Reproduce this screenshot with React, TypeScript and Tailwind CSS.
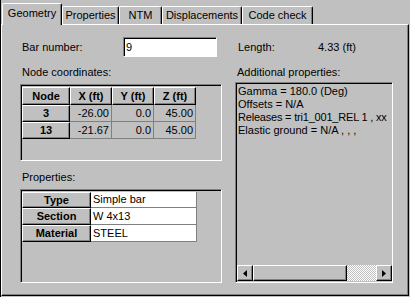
import React from "react";

const raised =
  "border border-t-white border-l-white border-b-black border-r-black shadow-[inset_-1px_-1px_0_#808080]";
const sunken =
  "border border-t-[#808080] border-l-[#808080] border-b-white border-r-white shadow-[inset_1px_1px_0_#000]";

function Tab({ label, w, active }: { label: string; w: string; active?: boolean }) {
  return active ? (
    <div
      className={`relative z-10 -mb-px h-[22px] ${w} bg-[#c0c0c0] border-l border-t border-r border-l-white border-t-white border-r-black rounded-t-[2px] shadow-[inset_-1px_0_0_#808080] pt-[3px] text-center`}
    >
      {label}
    </div>
  ) : (
    <div
      className={`h-[18px] ${w} bg-[#c0c0c0] border-l border-t border-r border-l-white border-t-white border-r-black rounded-t-[2px] shadow-[inset_-1px_0_0_#808080] pt-[2px] text-center`}
    >
      {label}
    </div>
  );
}

function HeadCell({ children, w, h }: { children: React.ReactNode; w: string; h: string }) {
  return (
    <div className={`${w} ${h} ${raised} flex items-center justify-center font-bold`}>{children}</div>
  );
}

function NumCell({ children, w, h }: { children: React.ReactNode; w: string; h: string }) {
  return (
    <div
      className={`${w} ${h} border-r border-b border-[#808080] flex items-center justify-end pr-[2px]`}
    >
      {children}
    </div>
  );
}

function ValCell({ children, w, h }: { children: React.ReactNode; w: string; h: string }) {
  return (
    <div
      className={`${w} ${h} bg-white border-r border-b border-[#808080] flex items-center pl-[2px]`}
    >
      {children}
    </div>
  );
}

function LeftArrow() {
  return (
    <svg width="4" height="7" viewBox="0 0 4 7">
      <path d="M4 0 L0 3.5 L4 7 Z" fill="#000" />
    </svg>
  );
}
function RightArrow() {
  return (
    <svg width="4" height="7" viewBox="0 0 4 7">
      <path d="M0 0 L4 3.5 L0 7 Z" fill="#000" />
    </svg>
  );
}

export default function App() {
  const nodes = [
    { n: "3", x: "-26.00", y: "0.0", z: "45.00" },
    { n: "13", x: "-21.67", y: "0.0", z: "45.00" },
  ];
  return (
    <div className="w-[410px] h-[297px] bg-[#c0c0c0] overflow-hidden border-l border-l-black font-['Liberation_Sans',Arial,sans-serif] text-[11px] leading-[13px] text-black">
      {/* tab strip */}
      <div className="flex items-end h-[24px] pl-[1px]">
        <Tab label="Geometry" w="w-[60px]" active />
        <Tab label="Properties" w="w-[57px]" />
        <Tab label="NTM" w="w-[43px]" />
        <Tab label="Displacements" w="w-[80px]" />
        <Tab label="Code check" w="w-[71px]" />
      </div>
      {/* panel */}
      <div className="w-[408px] h-[272px] border border-t-white border-l-white border-r-black border-b-black shadow-[inset_-1px_-1px_0_#808080] pl-[18px] pt-[12px]">
        <div className="flex h-[20px] items-center">
          <div className="w-[103px] pl-[2px]">Bar number:</div>
          <div className={`w-[94px] h-[20px] bg-white ${sunken} flex items-center pl-[2px]`}>9</div>
          <div className="w-[18px]" />
          <div className="w-[83px] pl-[3px]">Length:</div>
          <div>4.33 (ft)</div>
        </div>

        <div className="flex mt-[9px]">
          {/* left column */}
          <div className="w-[202px] flex flex-col">
            <div className="h-[13px] pl-[2px]">Node coordinates:</div>
            <div className={`mt-[5px] h-[77px] ${sunken} pl-[1px] pt-[2px]`}>
              <div className="flex">
                <HeadCell w="w-[48px]" h="h-[18px]">Node</HeadCell>
                <HeadCell w="w-[42px]" h="h-[18px]">X (ft)</HeadCell>
                <HeadCell w="w-[42px]" h="h-[18px]">Y (ft)</HeadCell>
                <HeadCell w="w-[42px]" h="h-[18px]">Z (ft)</HeadCell>
              </div>
              {nodes.map((r) => (
                <div className="flex" key={r.n}>
                  <HeadCell w="w-[48px]" h="h-[17px]">{r.n}</HeadCell>
                  <NumCell w="w-[42px]" h="h-[17px]">{r.x}</NumCell>
                  <NumCell w="w-[42px]" h="h-[17px]">{r.y}</NumCell>
                  <NumCell w="w-[42px]" h="h-[17px]">{r.z}</NumCell>
                </div>
              ))}
            </div>

            <div className="mt-[10px] h-[13px] pl-[2px]">Properties:</div>
            <div className={`mt-[5px] h-[94px] ${sunken} pl-[1px] pt-[2px]`}>
              <div className="flex">
                <HeadCell w="w-[69px]" h="h-[16px]">Type</HeadCell>
                <ValCell w="w-[106px]" h="h-[16px]">Simple bar</ValCell>
              </div>
              <div className="flex">
                <HeadCell w="w-[69px]" h="h-[17px]">Section</HeadCell>
                <ValCell w="w-[106px]" h="h-[17px]">W 4x13</ValCell>
              </div>
              <div className="flex">
                <HeadCell w="w-[69px]" h="h-[17px]">Material</HeadCell>
                <ValCell w="w-[106px]" h="h-[17px]">STEEL</ValCell>
              </div>
            </div>
          </div>

          {/* right column */}
          <div className="ml-[13px] w-[158px] flex flex-col">
            <div className="h-[13px] pl-[2px]">Additional properties:</div>
            <div className={`mt-[3px] h-[201px] ${sunken} flex flex-col`}>
              <div className="flex-1 overflow-hidden whitespace-nowrap pl-[2px] pt-[2px]">
                <div>Gamma = 180.0 (Deg)</div>
                <div>Offsets = N/A</div>
                <div className="tracking-[-0.2px]">Releases = tri1_001_REL 1 , xx</div>
                <div>Elastic ground = N/A , , ,</div>
              </div>
              <div className="flex h-[16px] ml-[1px] mb-[1px]">
                <div className={`w-[16px] h-[16px] ${raised} flex items-center justify-center`}>
                  <LeftArrow />
                </div>
                <div className={`w-[94px] h-[16px] ${raised}`} />
                <div className="w-[29px] h-[16px] bg-[image:repeating-conic-gradient(#ffffff_0%_25%,#c0c0c0_0%_50%)] bg-[length:2px_2px]" />
                <div className={`w-[16px] h-[16px] ${raised} flex items-center justify-center`}>
                  <RightArrow />
                </div>
              </div>
            </div>
          </div>
        </div>
      </div>
    </div>
  );
}
